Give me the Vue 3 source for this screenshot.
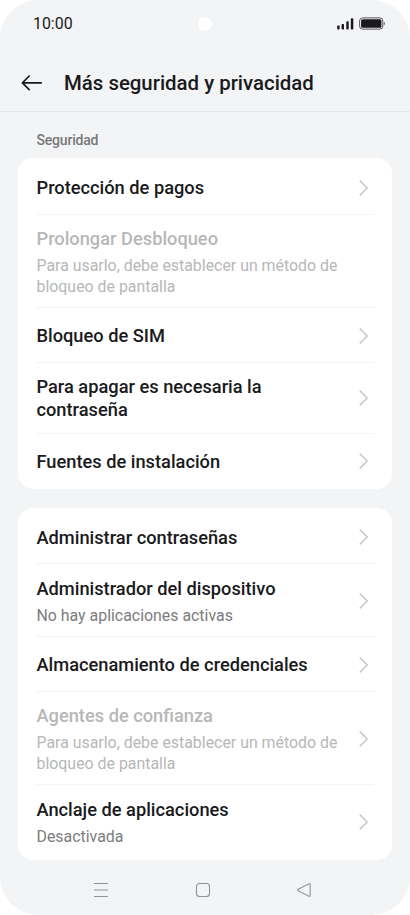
<template>
	<div class="screen">
		<div class="status-bar">
			<span class="clock">10:00</span>
			<span class="camera"></span>
			<div class="status-icons">
				<svg class="signal" width="17" height="12" viewBox="0 0 17 12">
					<rect x="0.2" y="7.6" width="2.4" height="3.9" rx="0.7" />
					<rect x="4.6" y="6" width="2.4" height="5.5" rx="0.7" />
					<rect x="9.3" y="3.2" width="2.4" height="8.3" rx="0.7" />
					<rect x="13.8" y="0.2" width="2.5" height="11.3" rx="0.7" />
				</svg>
				<svg class="battery" width="27" height="13" viewBox="0 0 27 13">
					<rect class="outline" x="0.6" y="0.9" width="23.2" height="11.2" rx="3" />
					<rect x="2.1" y="2.3" width="20.3" height="8.4" rx="1.5" />
					<path class="cap" d="M24.8 4.5 Q26 4.8 26 6.5 Q26 8.2 24.8 8.5 Z" />
				</svg>
			</div>
		</div>

		<header class="app-bar">
			<svg class="back" width="22" height="18" viewBox="0 0 22 18">
				<path d="M20.3 8.8 H1.6 M8.2 2 L1.4 8.8 L8.2 15.6" />
			</svg>
			<h1>Más seguridad y privacidad</h1>
		</header>

		<main>
			<h2>Seguridad</h2>
			<section v-for="(group, index) in groups" :key="index" class="card">
				<div
					v-for="item in group"
					:key="item.title"
					:class="['row', { disabled: item.disabled }]"
				>
					<div class="row-text">
						<div class="row-title">{{ item.title }}</div>
						<div v-if="item.summary" class="row-summary">{{ item.summary }}</div>
					</div>
					<svg v-if="!item.noArrow" class="chevron" width="10" height="16" viewBox="0 0 10 16">
						<path d="M0.8 0.6 L8.2 8 L0.8 15.4" />
					</svg>
				</div>
			</section>
		</main>

		<nav class="nav-bar">
			<svg width="16" height="16" viewBox="0 0 16 16">
				<path d="M1 1.5 H15 M1 8 H15 M1 14.5 H15" />
			</svg>
			<svg width="16" height="16" viewBox="0 0 16 16">
				<rect x="1.5" y="1.5" width="13" height="13" rx="3" />
			</svg>
			<svg width="16" height="16" viewBox="0 0 16 16">
				<path d="M13 1.8 L2.2 7.2 Q0.8 8 2.2 8.8 L13 14.2 Q14.2 14.6 14.2 13.4 V2.6 Q14.2 1.4 13 1.8 Z" />
			</svg>
		</nav>
	</div>
</template>

<script setup>
const lockHint = "Para usarlo, debe establecer un método de bloqueo de pantalla";

const groups = [
	[
		{ title: "Protección de pagos" },
		{ title: "Prolongar Desbloqueo", summary: lockHint, disabled: true, noArrow: true },
		{ title: "Bloqueo de SIM" },
		{ title: "Para apagar es necesaria la contraseña" },
		{ title: "Fuentes de instalación" },
	],
	[
		{ title: "Administrar contraseñas" },
		{ title: "Administrador del dispositivo", summary: "No hay aplicaciones activas" },
		{ title: "Almacenamiento de credenciales" },
		{ title: "Agentes de confianza", summary: lockHint, disabled: true },
		{ title: "Anclaje de aplicaciones", summary: "Desactivada" },
	],
];
</script>

<style>
body {
	margin: 0;
	background: #fff;
}
</style>

<style scoped>
.screen {
	display: flex;
	flex-direction: column;
	box-sizing: border-box;
	width: 410px;
	height: 915px;
	overflow: hidden;
	border-radius: 38px;
	background: #f3f4f6;
	color: #1a1a1c;
	font-family: Roboto, "Liberation Sans", sans-serif;
}

.status-bar {
	display: grid;
	grid-template-columns: 1fr 14px 1fr;
	align-items: center;
	height: 47px;
	padding: 0 24.5px 0 33px;
	box-sizing: border-box;
}
.clock {
	padding-top: 1px;
	font-size: 15.9px;
	line-height: 20px;
}
.camera {
	width: 14px;
	height: 14px;
	margin-left: -4.5px;
	border-radius: 50%;
	background: #fff;
}
.status-icons {
	display: flex;
	justify-content: flex-end;
	align-items: center;
	gap: 5px;
	fill: #1a1a1c;
}
.outline {
	fill: none;
	stroke: #555;
	stroke-width: 1;
}
.cap {
	fill: #77787a;
}

.app-bar {
	display: flex;
	align-items: center;
	height: 65px;
	padding: 8px 21px 0;
	box-sizing: border-box;
	border-bottom: 1px solid #e6e7e9;
}
.back {
	fill: none;
	stroke: #1a1a1c;
	stroke-width: 1.7;
	stroke-linecap: round;
	stroke-linejoin: round;
}
h1 {
	margin: 0 0 0 21px;
	font-size: 20.4px;
	font-weight: 500;
	line-height: 26px;
	white-space: nowrap;
}

main {
	padding: 19px 18.2px 0;
}
h2 {
	margin: 0 0 9px 18.3px;
	font-size: 14px;
	font-weight: 500;
	line-height: 18px;
	letter-spacing: -0.2px;
	color: #77787a;
}
.card {
	padding: 2.4px 18px 1.4px;
	border-radius: 15px;
	background: #fff;
}
.card + .card {
	margin-top: 18.2px;
}
.row {
	display: flex;
	align-items: center;
	justify-content: space-between;
	min-height: 54.3px;
	padding: 12.6px 4.8px 12.4px 0.3px;
	box-sizing: border-box;
}
.row + .row {
	box-shadow: 0 -1px #f4f4f5;
}
.row-text {
	width: 306px;
}
.row-title {
	max-width: 290px;
	font-size: 18.25px;
	font-weight: 500;
	line-height: 23px;
}
.row-summary {
	margin: 6.2px 0 -1.8px;
	font-size: 15.9px;
	line-height: 20.7px;
	color: #7c7c7e;
}
.disabled .row-title,
.disabled .row-summary {
	color: #b7b7b8;
}
.chevron {
	flex: none;
	fill: none;
	stroke: #c8c8c9;
	stroke-width: 1.5;
}

.nav-bar {
	display: flex;
	justify-content: space-between;
	padding: 22px 98.5px 0 93px;
}
.nav-bar svg {
	fill: none;
	stroke: #929395;
	stroke-width: 1.1;
}
.nav-bar svg:nth-child(2) {
	margin-left: 1px;
}
</style>
